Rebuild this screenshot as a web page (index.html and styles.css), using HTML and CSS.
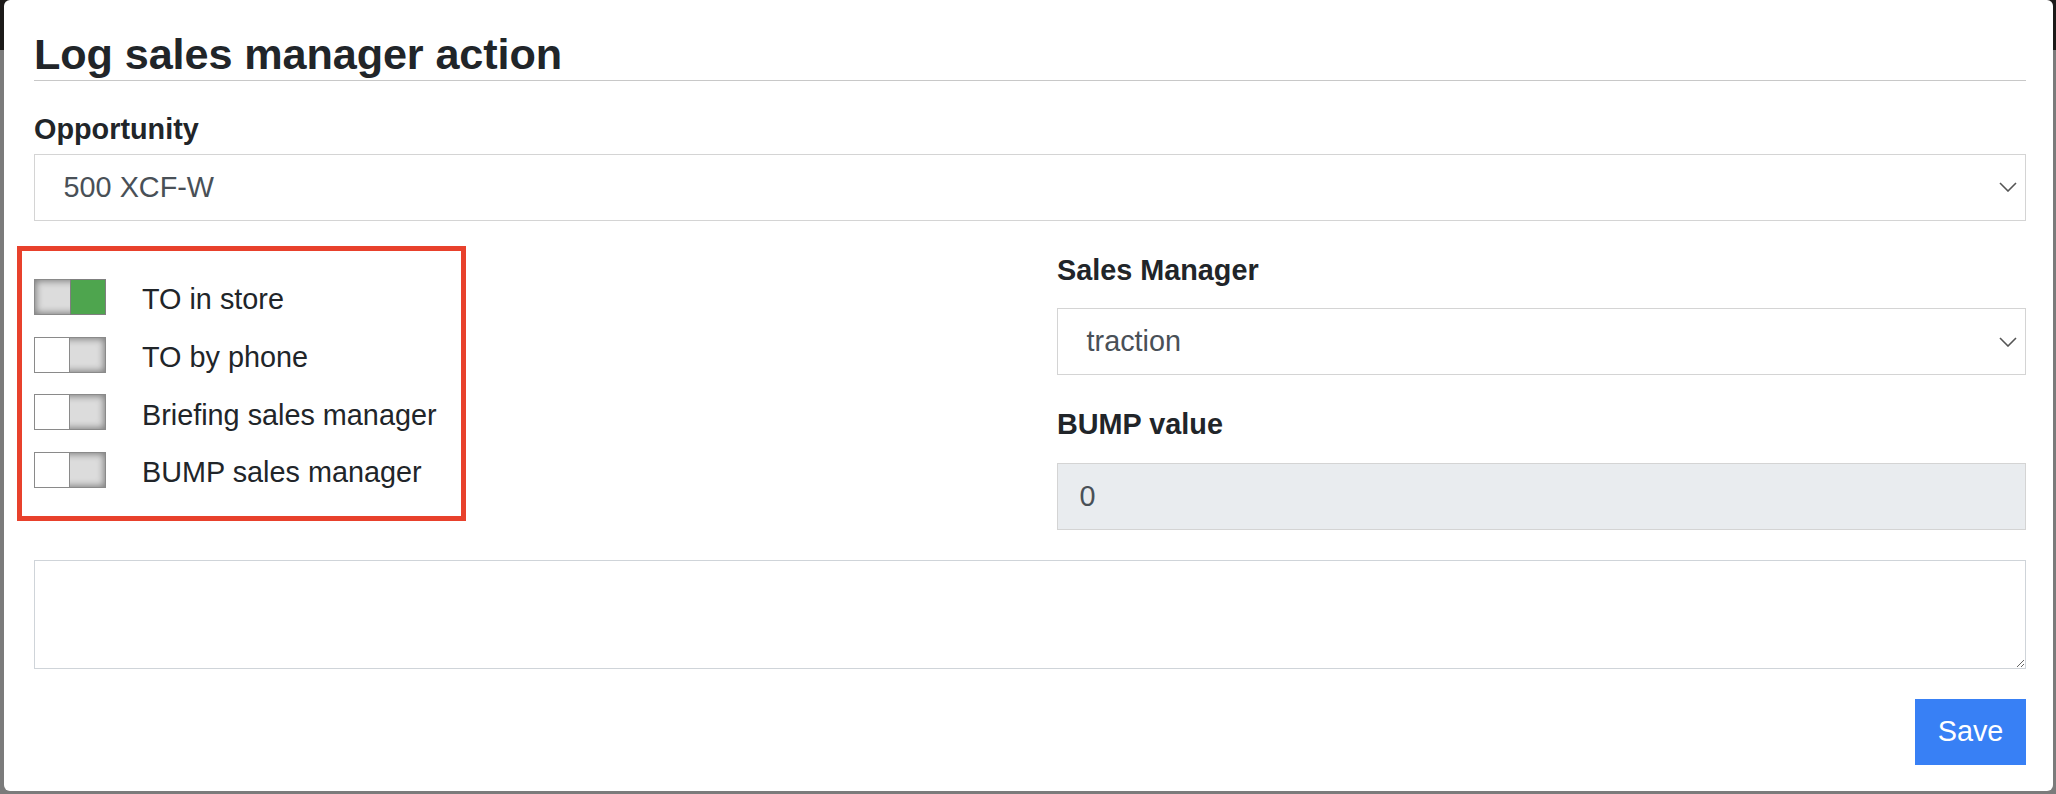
FILE: index.html
```html
<!DOCTYPE html>
<html lang="en">
<head>
<meta charset="utf-8">
<title>Log sales manager action</title>
<link rel="stylesheet" href="styles.css">
</head>
<body>
<div class="modal">
  <h1 class="title">Log sales manager action</h1>

  <div class="group group-opportunity">
    <label class="label label-tight">Opportunity</label>
    <div class="select">
      <span class="select-value">500 XCF-W</span>
      <svg class="chevron" width="18" height="10" viewBox="0 0 18 10"><path d="M1 1 L9 9 L17 1" fill="none" stroke="#555" stroke-width="1.6"/></svg>
    </div>
  </div>

  <div class="row">
    <div class="col col-left">
      <div class="highlight">
        <div class="switch-row">
          <span class="toggle on"><span class="knob"></span></span>
          <span class="switch-label">TO in store</span>
        </div>
        <div class="switch-row">
          <span class="toggle"><span class="knob"></span></span>
          <span class="switch-label">TO by phone</span>
        </div>
        <div class="switch-row">
          <span class="toggle"><span class="knob"></span></span>
          <span class="switch-label">Briefing sales manager</span>
        </div>
        <div class="switch-row">
          <span class="toggle"><span class="knob"></span></span>
          <span class="switch-label">BUMP sales manager</span>
        </div>
      </div>
    </div>
    <div class="col col-right">
      <label class="label">Sales Manager</label>
      <div class="select">
        <span class="select-value">traction</span>
        <svg class="chevron" width="18" height="10" viewBox="0 0 18 10"><path d="M1 1 L9 9 L17 1" fill="none" stroke="#555" stroke-width="1.6"/></svg>
      </div>
      <label class="label label-second">BUMP value</label>
      <div class="input disabled">0</div>
    </div>
  </div>

  <textarea class="notes"></textarea>

  <div class="actions">
    <button class="btn-save">Save</button>
  </div>
</div>
</body>
</html>
```

FILE: styles.css
```css
* { box-sizing: border-box; }

html, body {
  margin: 0;
  height: 794px;
  overflow: hidden;
}

body {
  background: linear-gradient(to bottom, #1c1a19 0, #1c1a19 50px, #7b7b7b 50px, #7b7b7b 100%);
  font-family: "Liberation Sans", Arial, Helvetica, sans-serif;
  color: #212529;
  padding: 0 3px 0 4px;
}

.modal {
  background: #fff;
  height: 791px;
  border-radius: 6px;
  padding: 29px 27px 0 30px;
  display: flex;
  flex-direction: column;
}

.title {
  margin: 0;
  font-size: 43.2px;
  line-height: 51px;
  font-weight: 700;
  border-bottom: 1px solid #c8c8c8;
  letter-spacing: -0.1px;
}

.label {
  display: block;
  font-size: 28.8px;
  line-height: 43.2px;
  font-weight: 700;
  margin-bottom: 16px;
}

.group-opportunity {
  margin-top: 27.4px;
}

.label-tight {
  margin-bottom: 2px;
}

.select {
  height: 67px;
  border: 1px solid #d4d4d4;
  background: #fff;
  display: flex;
  align-items: center;
  justify-content: space-between;
  padding: 0 8px 0 28.6px;
}

.select-value {
  font-size: 28.8px;
  color: #495057;
}

.chevron {
  display: block;
}

.row {
  display: flex;
  margin-top: 25.4px;
}

.col-left {
  width: 996px;
  flex: none;
}

.col-right {
  flex: 1;
  margin-left: 27px;
  padding-top: 3px;
}

.highlight {
  margin-left: -17px;
  width: 449px;
  border: 5px solid #e8412c;
  padding: 27.4px 0 21px 12px;
}

.switch-row {
  display: flex;
  align-items: flex-start;
  height: 43.2px;
  margin-bottom: 14.5px;
}

.switch-row:last-child {
  margin-bottom: 0;
}

.toggle {
  position: relative;
  width: 72px;
  height: 36px;
  margin-top: 0.6px;
  flex: none;
  border: 1px solid #8a8a8a;
  background: #dcdcdc;
  box-shadow: inset 0 0 7px 1px rgba(0, 0, 0, 0.45);
}

.knob {
  position: absolute;
  top: -1px;
  left: -1px;
  width: 36px;
  height: 36px;
  background: #fff;
  border: 1px solid #8a8a8a;
}

.toggle.on .knob {
  left: auto;
  right: -1px;
  background: #4ea54e;
  border-color: #7f7f7f;
}

.switch-label {
  margin-left: 36px;
  font-size: 28.8px;
  line-height: 43.2px;
}

.label-second {
  margin-top: 28px;
  margin-bottom: 16.8px;
}

.input {
  height: 67px;
  border: 1px solid #d4d4d4;
  padding: 0 21.6px;
  display: flex;
  align-items: center;
  font-size: 28.8px;
  color: #495057;
}

.input.disabled {
  background: #e9ecef;
}

.notes {
  display: block;
  margin: 30px 0 0 0;
  width: 100%;
  height: 109px;
  border: 1px solid #cfd4d9;
  border-radius: 0;
  padding: 8px 20px;
  font-family: "Liberation Sans", Arial, sans-serif;
  font-size: 28.8px;
  resize: vertical;
  outline: none;
}

.actions {
  display: flex;
  justify-content: flex-end;
  margin-top: 29.7px;
}

.btn-save {
  width: 111px;
  height: 66px;
  border: none;
  border-radius: 0;
  background: #3880f5;
  color: #fff;
  font-family: "Liberation Sans", Arial, sans-serif;
  font-size: 28.8px;
  padding: 0;
}
```
